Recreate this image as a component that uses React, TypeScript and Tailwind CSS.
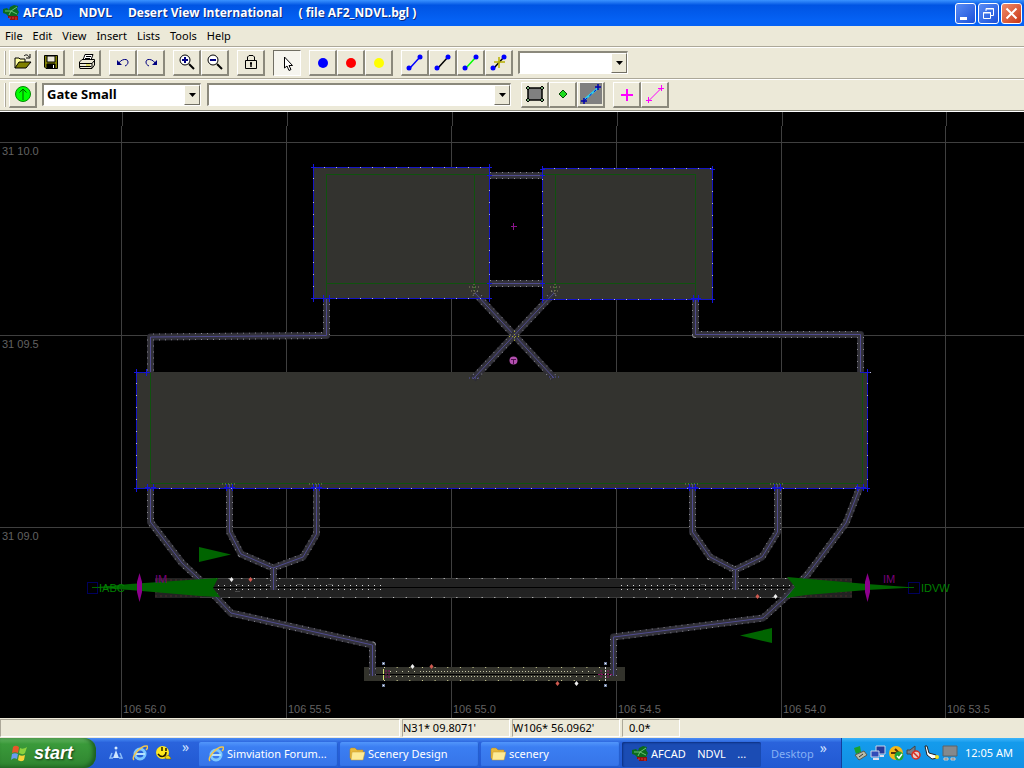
import type { ReactNode } from "react";

const menus = ["File", "Edit", "View", "Insert", "Lists", "Tools", "Help"];

const gridX = [
  { x: 121, label: "106 56.0" },
  { x: 286, label: "106 55.5" },
  { x: 451, label: "106 55.0" },
  { x: 616, label: "106 54.5" },
  { x: 781, label: "106 54.0" },
  { x: 945, label: "106 53.5" },
];

const gridY = [
  { y: 142, label: "31 10.0" },
  { y: 335, label: "31 09.5" },
  { y: 527, label: "31 09.0" },
];

const taxiways = [
  "M490 175.500H543",
  "M490 283.500H543",
  "M326.500 298V335.500L150.500 337V372",
  "M695.500 298V334.500H860.500V372",
  "M475 293L554 378",
  "M554 293L473 379",
  "M150.500 488V522L182 563L197 577L213 594L231 613L372.500 645V676",
  "M229.500 484V532L241 554L273 568L303 557L316.500 534V484",
  "M273.500 568V590",
  "M692.500 484V532L710 557L735 570L762 557L777.500 532V484",
  "M735.500 570V590",
  "M860 487L846 523L820 558L807 575L785 598L763 618L613.500 637V676",
];

// x, y, width, height of each one pixel segment
const links = [
  [326, 174, 163, 1], [326, 283, 163, 1], [326, 174, 1, 124], [474, 174, 1, 116],
  [543, 174, 153, 1], [543, 283, 153, 1], [555, 174, 1, 116], [695, 174, 1, 124],
  [150, 373, 1, 111], [862, 373, 1, 111], [150, 483, 713, 1],
];

const edges = [
  [313, 167, 177, 1], [313, 298, 177, 1], [313, 167, 1, 132], [489, 167, 1, 132],
  [543, 168, 170, 1], [543, 299, 170, 1], [542, 168, 1, 132], [712, 168, 1, 132],
  [136, 372, 14, 1], [860, 372, 8, 1], [136, 488, 732, 1], [136, 372, 1, 117], [867, 372, 1, 117],
];

const nodes = [
  [313, 167], [489, 167], [489, 175], [489, 283], [489, 298], [313, 298], [323, 298], [329, 298],
  [542, 169], [542, 175], [542, 283], [542, 299], [712, 169], [712, 299], [693, 298], [698, 298],
  [136, 372], [146, 372], [136, 488], [147, 487], [153, 487], [226, 487], [232, 487], [313, 487], [319, 487],
  [689, 487], [695, 487], [774, 487], [780, 487], [857, 487], [863, 487], [867, 488], [867, 372],
];

const papi = [
  { x: 231, y: 579, color: "#eee" },
  { x: 250, y: 579, color: "#d05a50" },
  { x: 757, y: 596, color: "#d05a50" },
  { x: 775, y: 596, color: "#eee" },
  { x: 412, y: 666, color: "#eee" },
  { x: 431, y: 666, color: "#d05a50" },
  { x: 557, y: 683, color: "#d05a50" },
  { x: 576, y: 683, color: "#eee" },
];

const PlaneLogo = () => (
  <svg className="size-4 shrink-0" viewBox="0 0 16 16" aria-hidden="true">
    <path d="M0 4L4 3L6 5L7 2L11 0L15 1L14 4L16 7L14 11L10 11L6 12L3 9L0 8Z" fill="#0b6b1d" />
    <path d="M2 6L8 6L14 2M8 6L14 9M8 6L6 10" stroke="#6cc278" fill="none" />
    <path d="M5 11H15V15H7V13H5Z" fill="#8c1212" />
    <path d="M7 12V14M9 13H11M13 12V15" stroke="#e23b2c" />
  </svg>
);

const IeIcon = () => (
  <svg className="size-4 shrink-0" viewBox="0 0 16 16" aria-hidden="true">
    <circle cx="8" cy="9" r="5" fill="none" stroke="#7cc8ff" strokeWidth="3" />
    <path d="M4 9H13" stroke="#b6e2ff" strokeWidth="2" />
    <path d="M2 15C-1 12 9 0 15 1C16 2 15 4 14 5" fill="none" stroke="#f3c64b" strokeWidth="1.500" />
  </svg>
);

const FolderIcon = () => (
  <svg className="size-4 shrink-0" viewBox="0 0 16 16" aria-hidden="true">
    <path d="M1 3L2 2H6L8 4H14V13H2L1 12Z" fill="#e6b93c" stroke="#b8851d" strokeWidth="0.500" />
    <path d="M3 6H16L14 14H2Z" fill="#fdeb96" stroke="#c99a2c" strokeWidth="0.500" />
  </svg>
);

const Icon = ({ children }: { children: ReactNode }) => (
  <svg className="size-6" viewBox="0 0 24 24" fill="none" stroke="#000" strokeWidth="1" aria-hidden="true">
    {children}
  </svg>
);

const Tool = ({ label, pressed, children }: { label: string; pressed?: boolean; children: ReactNode }) => (
  <button
    type="button"
    aria-label={label}
    aria-pressed={pressed}
    className={
      pressed
        ? "flex h-[26px] w-7 items-center justify-center border border-r-white border-b-white border-t-[#716f64] border-l-[#716f64] bg-[#f6f5ee]"
        : "flex h-[26px] w-7 items-center justify-center border-t border-r-2 border-b-2 border-l border-t-white border-r-[#8b897c] border-b-[#8b897c] border-l-white bg-[#ece9d8]"
    }
  >
    <Icon>{children}</Icon>
  </button>
);

const Link = ({ stroke, cross }: { stroke: string; cross?: boolean }) => (
  <>
    <path d="M7 18L17 7" stroke={stroke} strokeWidth="1.500" />
    <circle cx="6" cy="18" r="2.500" fill="#00f" stroke="none" />
    <circle cx="17" cy="7" r="2.500" fill="#00f" stroke="none" />
    {cross && <path d="M7 12H18M12 7V18" stroke="#b8b000" strokeWidth="1.500" />}
  </>
);

const Combo = ({ label, value, width }: { label: string; value: string; width: string }) => (
  <div className={`relative h-[23px] border-t-2 border-l-2 border-r border-b border-t-[#8b897c] border-l-[#8b897c] border-r-white border-b-white bg-white ${width}`}>
    <select
      aria-label={label}
      defaultValue={value}
      className="block h-full w-full appearance-none bg-transparent pb-[2px] pl-[3px] font-['Open_Sans',sans-serif] text-[13px] leading-4 font-bold text-black outline-none"
    >
      <option value={value}>{value}</option>
    </select>
    <span className="pointer-events-none absolute inset-y-0 right-0 flex w-4 items-center justify-center border border-t-white border-r-[#716f64] border-b-[#716f64] border-l-white bg-[#ece9d8]">
      <svg className="h-1 w-[7px]" viewBox="0 0 7 4" aria-hidden="true">
        <path d="M0 0H7L3.500 4Z" fill="#000" />
      </svg>
    </span>
  </div>
);

const Grip = () => <span className="mr-[3px] ml-1 h-6 w-[2px] border-r border-r-[#aca899] bg-white" />;

const AirportMap = () => (
  <svg
    className="block h-full w-full bg-black font-['Liberation_Sans',sans-serif] text-[11px]"
    viewBox="0 112 1024 606"
    role="img"
    aria-label="Airport layout"
  >
    <g stroke="#3f3f3f">
      {gridX.map((line) => (
        <path key={line.x} d={`M${line.x + 1.5} 112V126M${line.x + 0.5} 126V718`} />
      ))}
      {gridY.map((line) => (
        <path key={line.y} d={`M0 ${line.y + 0.5}H1024`} />
      ))}
    </g>
    <g fill="#626262">
      {gridX.map((line) => (
        <text key={line.x} x={line.x + 2} y="713">{line.label}</text>
      ))}
      {gridY.map((line) => (
        <text key={line.y} x="2" y={line.y + 13}>{line.label}</text>
      ))}
    </g>

    {/* aprons */}
    <g fill="#33332f">
      <rect x="313" y="167" width="177" height="132" />
      <rect x="543" y="169" width="170" height="131" />
      <rect x="136" y="372" width="732" height="117" />
    </g>

    {/* main runway */}
    <rect x="155" y="578" width="697" height="20" fill="#222" />
    <path d="M200 578.500H806M200 597.500H806" stroke="#3d3d3d" />
    <path d="M155 580H205M155 583H205M155 592H205M155 596H205M800 580H852M800 583H852M800 592H852M800 596H852" stroke="#4b2b2b" strokeDasharray="2 3" />
    <path d="M155 587.500H852" stroke="#000" />
    <path d="M216 578.500H796M216 597.500H796" stroke="#d8d8d8" strokeDasharray="1 11.650" />
    <path d="M218 585.500H386M218 589.500H386M621 585.500H792M621 589.500H792" stroke="#d8d8d8" strokeDasharray="1 5" />
    <path d="M235 584.500H335M235 591.500H240M670 584.500H765" stroke="#4a4a4a" strokeDasharray="5 26" />

    {/* short runway */}
    <rect x="364" y="667" width="261" height="14" fill="#33332c" />
    <path d="M372 674.500H616" stroke="#000" />
    <path d="M384 667.500H606M384 680.500H606" stroke="#d8d89a" strokeDasharray="1 11.650" />
    <path d="M390 671.500H600M390 676.500H600" stroke="#d0d0b0" strokeDasharray="1 5" />
    <path d="M420 671.500H570M420 676.500H570" stroke="#c8c8a8" strokeDasharray="1 2" />

    <g fill="none" strokeLinejoin="round">
      {taxiways.map((d) => (
        <g key={d}>
          <path d={d} stroke="#2c2b33" strokeWidth="7" />
          <path d={d} stroke="#8c8c94" strokeWidth="7" strokeDasharray="1 5" />
          <path d={d} stroke="#33323a" strokeWidth="5" />
          <path d={d} stroke="#504c90" strokeWidth="1" />
        </g>
      ))}
    </g>
    <g fill="#0f520f">
      {links.map(([x, y, w, h]) => (
        <rect key={`${x}-${y}-${w}`} x={x} y={y} width={w} height={h} />
      ))}
    </g>
    {edges.map(([x, y, w, h]) => (
      <g key={`${x}-${y}-${w}`}>
        <rect x={x} y={y} width={w} height={h} fill="#1414c4" />
        <path
          d={w > h ? `M${x + 11} ${y + 0.5}H${x + w}` : `M${x + 0.5} ${y + 11}V${y + h}`}
          stroke="#b4b4dc"
          strokeDasharray="1 11"
        />
      </g>
    ))}
    {nodes.map(([x, y]) => (
      <path key={`${x}-${y}`} d={`M${x - 2} ${y + 0.5}h5M${x + 0.5} ${y - 3}v7`} stroke="#1414dc" />
    ))}

    {/* hold markers round the crossing */}
    <g fill="none" stroke="#8a8660" strokeDasharray="1 2">
      <path d="M469 287H479M471 291H478M474 284V296M550 287H561M551 291H558M555 284V296" />
      <path d="M509 336.500H519M514.500 331V341" stroke="#a0a02c" />
      <path d="M469 378H479M549 377H559" stroke="#5656a8" />
      <path d="M222 484H236M309 484H323M685 484H699M770 484H784" />
    </g>

    {/* localizers */}
    <g fill="#006400">
      <path d="M92 587.500L130 584L218 578L213 588L220 597L200 596L130 590Z" />
      <path d="M914 587.500L867 584L787 577L795 587L786 598L806 595L867 590Z" />
      <path d="M199 547V562L231 554.500Z" />
      <path d="M772 628V643L740 635.500Z" />
    </g>
    <g fill="none" stroke="#00005c">
      <rect x="87.500" y="582.500" width="10" height="11" />
      <rect x="908.500" y="582.500" width="11" height="11" />
    </g>
    <g fill="#8c008c">
      <path d="M139.500 573L142 582V592L139.500 602L137 592V582Z" />
      <path d="M867.500 573L870 582V592L867.500 602L865 592V582Z" />
    </g>
    <path d="M92 587.500H122M884 587.500H914" stroke="#006400" />
    <g fill="#008000">
      <text x="99" y="592">IABC</text>
      <text x="921" y="592">IDVW</text>
    </g>
    <g fill="#780078">
      <text x="155" y="583">IM</text>
      <text x="883" y="583">IM</text>
    </g>

    {papi.map((light) => (
      <path key={light.x} d={`M${light.x + 0.5} ${light.y - 2}l2 2.500l-2 2.500l-2-2.500Z`} fill={light.color} />
    ))}
    <g fill="none" stroke="#8c1464">
      <path d="M386 670V679M389 670V679M601 670V679M608 670V679M598 674.500H612" strokeDasharray="2 1" />
      <path d="M383.500 669V680" stroke="#d6e070" strokeDasharray="5 1" />
      <path d="M605.500 667V681" stroke="#ddd" strokeDasharray="2 1" />
    </g>
    <g fill="#fff" stroke="#6c7c9c">
      <rect x="382.500" y="662.500" width="2" height="2" />
      <rect x="382.500" y="684.500" width="2" height="2" />
      <rect x="604.500" y="662.500" width="2" height="2" />
      <rect x="604.500" y="684.500" width="2" height="2" />
    </g>
    <path d="M511 226.500H517M513.500 223V230" stroke="#8c148c" />
    <circle cx="513.500" cy="360.500" r="4" fill="#b24fae" />
    <path d="M511 359.500H516M513.500 359V364" stroke="#50104e" />
  </svg>
);

const TitleBar = () => (
  <header className="flex h-[26px] items-center bg-linear-to-b from-[#3a92ff] from-0% via-[#0054e3] via-20% to-[#0562f5] to-80% pr-[2px] pl-[3px]">
    <PlaneLogo />
    <h1 className="ml-1 flex flex-1 gap-4 font-['Open_Sans',sans-serif] text-xs font-bold whitespace-nowrap text-white [text-shadow:1px_1px_#0a2a80]">
      <span>AFCAD</span>
      <span>NDVL</span>
      <span>Desert View International</span>
      <span>( file AF2_NDVL.bgl )</span>
    </h1>
    <div className="flex gap-[2px]">
      <button type="button" aria-label="Minimize" className="size-[21px] rounded-[3px] border border-white bg-linear-to-br from-[#5a8cf5] to-[#1b4fd8]">
        <svg viewBox="0 0 19 19" aria-hidden="true"><path d="M4 13H11V16H4Z" fill="#fff" /></svg>
      </button>
      <button type="button" aria-label="Restore" className="size-[21px] rounded-[3px] border border-white bg-linear-to-br from-[#5a8cf5] to-[#1b4fd8]">
        <svg viewBox="0 0 19 19" fill="none" stroke="#fff" aria-hidden="true">
          <path d="M7 7V4.500H14.500V11.500H12M4.500 8.500H11.500V14.500H4.500ZM4 9H12M7 5H15" />
        </svg>
      </button>
      <button type="button" aria-label="Close" className="size-[21px] rounded-[3px] border border-white bg-linear-to-br from-[#f08a68] to-[#c8330f]">
        <svg viewBox="0 0 19 19" stroke="#fff" strokeWidth="2" aria-hidden="true"><path d="M4.500 4.500L14.500 14.500M14.500 4.500L4.500 14.500" /></svg>
      </button>
    </div>
  </header>
);

const Toolbars = () => (
  <div>
    <div className="flex h-8 items-center border-t border-t-[#aca899] shadow-[inset_0_1px_#fff]">
      <Grip />
      <div className="flex gap-2">
        <div className="flex">
          <Tool label="Open">
            <path d="M4 18V8H8L9 9H14V12" fill="#ffffa0" />
            <path d="M4 18L8 12H20L15 18Z" fill="#808000" />
            <path d="M13 6C15 4 17 5 18 7M19 4V8H15" />
          </Tool>
          <Tool label="Save">
            <path d="M5.500 5.500H18.500V18.500H7L5.500 17Z" fill="#808000" />
            <path d="M8 6H16V12H8Z" fill="#ece9d8" />
            <path d="M8 14H16V18H8Z" fill="#000" />
            <path d="M14.500 15V18" stroke="#fff" />
          </Tool>
        </div>
        <Tool label="Print">
          <path d="M8 10L10 4.500H18L16 10" fill="#fff" />
          <path d="M4.500 12L7 9.500H19.500V15L17 18.500H5L4.500 17Z" fill="#ece9d8" />
          <path d="M5 13.500H17L19 11M17 13.500V18M11 6.500H16M10 8.500H15M5 16.500H16" />
          <path d="M11 15H15" stroke="#c8c800" />
        </Tool>
        <div className="flex">
          <Tool label="Undo">
            <path d="M8 13C10 9 17 8 17 12C17 14 16 15 14 16" stroke="#000080" />
            <path d="M6 10V15H11Z" fill="#000080" stroke="none" />
          </Tool>
          <Tool label="Redo">
            <path d="M16 13C14 9 7 8 7 12C7 14 8 15 10 16" stroke="#000080" />
            <path d="M18 10V15H13Z" fill="#000080" stroke="none" />
          </Tool>
        </div>
        <div className="flex">
          <Tool label="Zoom in">
            <circle cx="10" cy="10" r="5" fill="#fff" />
            <path d="M14 14L19 19" strokeWidth="2" />
            <path d="M7 10H13M10 7V13" stroke="#000080" strokeWidth="2" />
          </Tool>
          <Tool label="Zoom out">
            <circle cx="10" cy="10" r="5" fill="#fff" />
            <path d="M14 14L19 19" strokeWidth="2" />
            <path d="M7 10H13" stroke="#000080" strokeWidth="2" />
          </Tool>
        </div>
        <Tool label="Lock">
          <path d="M6.500 10.500H17.500V18.500H6.500ZM8.500 10V7L10 5.500H14L15.500 7V10" />
          <path d="M12 12V17M11 13.500H13" strokeWidth="1.500" />
        </Tool>
        <Tool label="Select" pressed>
          <path d="M9.500 6V17L12 15L14 19.500L16 18.500L14 14.500H17.500Z" fill="#fff" />
        </Tool>
        <div className="flex">
          <Tool label="Blue node"><circle cx="12" cy="13" r="5" fill="#00f" stroke="none" /></Tool>
          <Tool label="Red node"><circle cx="12" cy="13" r="5" fill="#f00" stroke="none" /></Tool>
          <Tool label="Yellow node"><circle cx="12" cy="13" r="5" fill="#ff0" stroke="none" /></Tool>
        </div>
        <div className="flex">
          <Tool label="Taxi link"><Link stroke="#00f" /></Tool>
          <Tool label="Runway link"><Link stroke="#000" /></Tool>
          <Tool label="Apron link"><Link stroke="#0f0" /></Tool>
          <Tool label="Split link"><Link stroke="#000" cross /></Tool>
        </div>
      </div>
      <div className="ml-[5px]"><Combo label="Taxiway name" value="" width="w-[110px]" /></div>
    </div>
    <div className="flex h-[33px] items-center border-y border-t-[#aca899] border-b-[#8b897c] shadow-[inset_0_1px_#fff]">
      <Grip />
      <Tool label="Add parking">
        <circle cx="12" cy="12" r="7.500" fill="#0f0" stroke="#008a00" />
        <path d="M12 18V7M8.500 10.500L12 7L15.500 10.500" stroke="#006000" />
      </Tool>
      <div className="ml-[5px]"><Combo label="Parking type" value="Gate Small" width="w-[159px]" /></div>
      <div className="ml-[6px]"><Combo label="Parking name" value="" width="w-[304px]" /></div>
      <div className="ml-[10px] flex gap-2">
        <div className="flex">
          <Tool label="Apron">
            <path d="M5 6H19V18H5Z" fill="#808080" strokeWidth="1.500" />
            <path d="M5 4l2 2l-2 2l-2-2ZM19 4l2 2l-2 2l-2-2ZM5 16l2 2l-2 2l-2-2ZM19 16l2 2l-2 2l-2-2Z" fill="#6d9e6d" />
          </Tool>
          <Tool label="Apron node"><path d="M12 8L16 12L12 16L8 12Z" fill="#1edc1e" stroke="#064806" /></Tool>
          <Tool label="Edge lights">
            <path d="M1 1H23V22H1Z" fill="#808080" stroke="none" />
            <path d="M5 18L19 6" stroke="#2ad4f0" strokeWidth="2" />
            <path d="M6 18L18 7" stroke="#00c" strokeDasharray="3 3" />
            <path d="M2 19H8M5 16V22M16 5H22M19 2V8" stroke="#00a" strokeWidth="1.500" />
          </Tool>
        </div>
        <div className="flex">
          <Tool label="Fence node"><path d="M6 13H18M12 7V19" stroke="#f0f" strokeWidth="2" /></Tool>
          <Tool label="Fence">
            <path d="M6 18.500L18 6.500M3 18.500H9M5.500 15V21M15 6.500H21M18.500 3V9" stroke="#f0f" />
          </Tool>
        </div>
      </div>
    </div>
  </div>
);

const StatusField = ({ className, children }: { className: string; children?: ReactNode }) => (
  <div className={`h-[18px] border border-t-[#aca899] border-r-white border-b-white border-l-[#aca899] leading-4 whitespace-nowrap ${className}`}>
    {children}
  </div>
);

const TaskButton = ({ icon, active, children }: { icon: ReactNode; active?: boolean; children: ReactNode }) => (
  <button
    type="button"
    className={
      active
        ? "flex h-[25px] w-[139px] items-center gap-[3px] overflow-hidden rounded-xs bg-[#1b4cb4] px-[10px] text-left whitespace-pre shadow-[inset_1px_1px_2px_#0c2f80]"
        : "flex h-[25px] w-[139px] items-center gap-[3px] overflow-hidden rounded-xs bg-linear-to-b from-[#5296fb] via-[#3b7ef2] via-20% to-[#3674e8] px-[9px] text-left whitespace-pre shadow-[inset_-1px_-1px_1px_#235bcb]"
    }
  >
    {icon}
    {children}
  </button>
);

const TaskBar = () => (
  <footer className="flex h-[30px] bg-linear-to-b from-[#4a8df5] from-0% via-[#2a63dc] via-15% to-[#2159d2] text-[11px] text-white">
    <button
      type="button"
      className="flex w-24 items-center gap-[6px] rounded-r-xl bg-linear-to-b from-[#63b462] via-[#3a9a3a] via-20% to-[#2f8430] pl-[10px] font-['Liberation_Sans',sans-serif] text-lg leading-5 font-bold italic shadow-[inset_-3px_-1px_4px_#1c5c1f] [text-shadow:1px_1px_2px_#143a14]"
    >
      <svg className="size-[18px]" viewBox="0 0 18 18" aria-hidden="true">
        <path d="M3 3C5 1 7 2 9 3L8 9C6 8 4 8 2 9Z" fill="#e8572a" />
        <path d="M10 4C12 5 14 5 17 3L15 9C13 11 11 10 9 9Z" fill="#8bd23e" />
        <path d="M2 10C4 9 6 9 8 10L7 15C5 14 3 14 1 16Z" fill="#6a9cf0" />
        <path d="M9 11C11 12 13 12 15 11L14 16C12 18 9 17 8 16Z" fill="#f8d338" />
      </svg>
      start
    </button>
    <nav aria-label="Quick launch" className="flex w-[103px] items-center gap-2 pl-3">
      <button type="button" aria-label="Messenger">
        <svg className="size-4" viewBox="0 0 16 16" aria-hidden="true">
          <circle cx="8" cy="3" r="1.500" fill="#d8ecff" />
          <path d="M8 5L11 13H5Z" fill="#cfe6ff" />
          <path d="M4 8L2 13H5M12 8L14 13H11" fill="none" stroke="#8cbcf8" strokeWidth="1.500" />
        </svg>
      </button>
      <button type="button" aria-label="Internet Explorer"><IeIcon /></button>
      <button type="button" aria-label="Smiley">
        <svg className="size-4" viewBox="0 0 16 16" aria-hidden="true">
          <circle cx="6.500" cy="7.500" r="6.500" fill="#ffe81c" />
          <path d="M6 2V6M10 3V6M2 9C5 13 10 12 10 7" fill="none" stroke="#221c00" strokeWidth="1.500" />
          <path d="M9 12C12 9 14 11 15 14H10Z" fill="#f4d818" stroke="#6a5a00" strokeWidth="0.500" />
        </svg>
      </button>
      <span className="mb-3 ml-[2px] text-sm leading-4 text-[#cfe0ff]">»</span>
    </nav>
    <div className="flex flex-1 items-center gap-[2px] pt-[2px]">
      <TaskButton icon={<IeIcon />}>Simviation Forum...</TaskButton>
      <TaskButton icon={<FolderIcon />}>Scenery Design</TaskButton>
      <TaskButton icon={<FolderIcon />}>scenery</TaskButton>
      <TaskButton icon={<PlaneLogo />} active>{"AFCAD    NDVL    ..."}</TaskButton>
      <span className="ml-2 text-[#86b0f4]">Desktop</span>
      <span className="mb-3 ml-1 text-sm leading-4 text-[#cfe0ff]">»</span>
    </div>
    <div className="flex w-[183px] items-center gap-[2px] border-l border-l-[#123e9c] bg-linear-to-b from-[#3ab4fa] via-[#149bec] via-15% to-[#1290e4] pl-[10px]">
      <svg className="size-4" viewBox="0 0 16 16" aria-hidden="true">
        <path d="M2 3L8 1L9 7L4 9Z" fill="#18a32e" />
        <path d="M3 10L12 6L15 10L7 15Z" fill="#b9bca8" stroke="#5a5a50" />
        <path d="M7 12L11 9" stroke="#333" />
      </svg>
      <svg className="size-4" viewBox="0 0 16 16" aria-hidden="true">
        <path d="M6 1H15V9H6Z" fill="#243a9a" stroke="#c9d4e8" />
        <path d="M1 6H9V12H1Z" fill="#314cb8" stroke="#c9d4e8" />
        <path d="M3 14H9M10 11H14" stroke="#dde" strokeWidth="2" />
      </svg>
      <svg className="size-4" viewBox="0 0 16 16" aria-hidden="true">
        <circle cx="8" cy="8" r="7" fill="#f6b818" />
        <path d="M3 8H11M7 4L11 8" fill="none" stroke="#55330a" strokeWidth="2" />
        <circle cx="11" cy="11" r="4.500" fill="#22a436" />
        <path d="M9 11L11 13L14 9" fill="none" stroke="#fff" strokeWidth="1.500" />
      </svg>
      <svg className="size-4" viewBox="0 0 16 16" aria-hidden="true">
        <path d="M1 5H4L9 1V12L4 9H1Z" fill="#777d88" stroke="#444" />
        <circle cx="10" cy="10" r="4" fill="#e8c8c4" stroke="#d62c20" strokeWidth="1.500" />
        <path d="M7 7L13 13" stroke="#d62c20" strokeWidth="1.500" />
      </svg>
      <svg className="size-4" viewBox="0 0 16 16" aria-hidden="true">
        <path d="M1 1L3 1L5 8L12 10L14 13L8 14L3 10Z" fill="#fff" stroke="#222" />
        <circle cx="13" cy="12" r="2" fill="#f0e028" />
      </svg>
      <svg className="size-4" viewBox="0 0 16 16" aria-hidden="true">
        <path d="M1 1H15V11H1Z" fill="#85898c" stroke="#5e6266" />
        <path d="M2 13H6V15H2ZM9 13H13V15H9Z" fill="#777" stroke="#ccc" />
      </svg>
      <time className="ml-[5px]">12:05 AM</time>
    </div>
  </footer>
);

const App = () => {
  return (
    <div className="flex h-screen flex-col overflow-hidden bg-[#ece9d8] font-['Noto_Sans',sans-serif] text-[11px] text-black">
      <TitleBar />
      <nav aria-label="Menu" className="flex h-5 items-center gap-[10px] pl-[5px]">
        {menus.map((menu) => (
          <button key={menu} type="button">{menu}</button>
        ))}
      </nav>
      <Toolbars />
      <main className="min-h-0 flex-1 border-t border-t-white">
        <AirportMap />
      </main>
      <div className="flex h-5 items-center gap-[2px] bg-[#ece9d8]">
        <StatusField className="w-[400px]" />
        <StatusField className="w-[108px]">N31* 09.8071'</StatusField>
        <StatusField className="w-[108px]">W106* 56.0962'</StatusField>
        <StatusField className="w-[58px] pl-[6px]">0.0*</StatusField>
      </div>
      <TaskBar />
    </div>
  );
};

export default App;
